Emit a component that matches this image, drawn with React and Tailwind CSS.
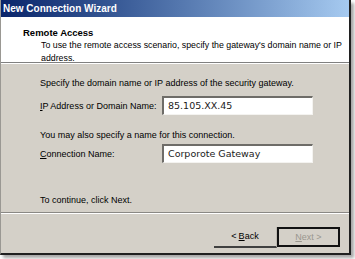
export default function App() {
  const ui = { fontFamily: '"Liberation Sans", Arial, sans-serif' };
  const field = { fontFamily: '"DejaVu Sans", Verdana, sans-serif' };

  return (
    <div className="w-[355px] h-[259px] bg-white overflow-hidden" style={ui}>
      <div className="w-[351px] h-[255px] flex flex-col bg-[#d4d0c8] border-l border-[#9a9893] border-r-2 border-r-[#202020] border-b-2 border-b-[#202020] shadow-[3px_3px_3px_rgba(0,0,0,0.35)]">
        {/* title bar */}
        <div className="h-[17px] shrink-0 flex items-center pl-[2px] bg-gradient-to-r from-[#0a246a] to-[#a6caf0]">
          <span className="text-[10px] font-bold text-white leading-none">New Connection Wizard</span>
        </div>

        {/* header */}
        <div className="h-[46px] shrink-0 bg-white pl-[22px] pt-[10px] border-b border-b-[#808080]">
          <div className="text-[9.5px] font-bold leading-[12px] text-black">Remote Access</div>
          <div className="pl-[18px] text-[8.8px] leading-[13px] text-black">
            To use the remote access scenario, specify the gateway's domain name or IP
            <br />
            address.
          </div>
        </div>
        <div className="h-px shrink-0 bg-white" />

        {/* body */}
        <div className="h-[148px] shrink-0 pl-[39px] text-[9px] text-black">
          <div className="mt-[13px] leading-[12px]">Specify the domain name or IP address of the security gateway.</div>
          <div className="mt-[7px] flex items-center">
            <span className="w-[122px] leading-[12px]">
              <span className="underline">I</span>P Address or Domain Name:
            </span>
            <div
              className="w-[151px] h-[19px] bg-white border-t-2 border-l-2 border-t-[#6e6c68] border-l-[#6e6c68] border-b border-r border-b-[#f4f3f0] border-r-[#f4f3f0] flex items-center pl-[4px] text-[9.5px] text-[#1a1a1a]"
              style={field}
            >
              85.105.XX.45
            </div>
          </div>
          <div className="mt-[14px] leading-[12px]">You may also specify a name for this connection.</div>
          <div className="mt-[3px] flex items-center">
            <span className="w-[122px] leading-[12px]">
              <span className="underline">C</span>onnection Name:
            </span>
            <div
              className="w-[151px] h-[19px] bg-white border-t-2 border-l-2 border-t-[#6e6c68] border-l-[#6e6c68] border-b border-r border-b-[#f4f3f0] border-r-[#f4f3f0] flex items-center pl-[4px] text-[9.5px] text-[#1a1a1a]"
              style={field}
            >
              Corporote Gateway
            </div>
          </div>
          <div className="mt-[31px] leading-[12px]">To continue, click Next.</div>
        </div>

        {/* footer */}
        <div className="h-px shrink-0 bg-[#8a8884]" />
        <div className="h-px shrink-0 bg-white" />
        <div className="flex-1 flex justify-end items-start pt-[13px] pr-[9px] text-[9px]">
          <button className="w-[63px] h-[21px] flex items-center justify-center border-b-2 border-b-[#404040] border-r border-r-[#bdb9b1] text-black leading-none">
            &lt; <span className="underline ml-[2px]">B</span>ack
          </button>
          <button className="w-[63px] h-[20px] flex items-center justify-center border-2 border-[#111] text-[#9a978f] leading-none">
            <span className="underline">N</span>ext &gt;
          </button>
        </div>
      </div>
    </div>
  );
}
